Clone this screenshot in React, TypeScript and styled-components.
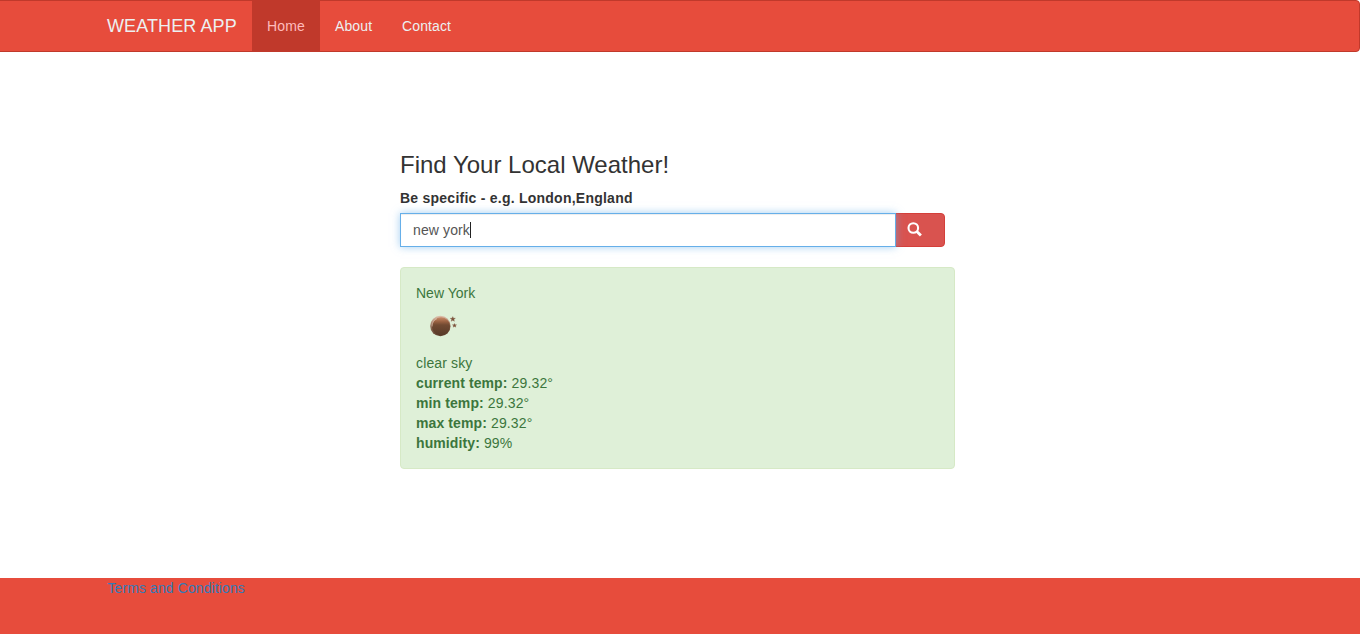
import React from "react";
import styled, { createGlobalStyle } from "styled-components";

const GlobalStyle = createGlobalStyle`
  *, *::before, *::after { box-sizing: border-box; }
  body {
    margin: 0;
    background: #fff;
    color: #333;
    font: 14px/20px "Liberation Sans", Arial, sans-serif;
    overflow: hidden;
  }
`;

const Page = styled.div`
  display: flex;
  flex-direction: column;
  height: 634px;
  margin-left: -5px;
`;

const Navbar = styled.nav`
  height: 52px;
  background: #e74c3c;
  border: 1px solid #c0392b;
  border-radius: 4px;
`;

const Container = styled.div`
  display: flex;
  width: 1170px;
  margin: 0 auto;
`;

const Brand = styled.a`
  padding: 15px 14px 15px 14.5px;
  width: 159.5px;
  font-size: 18px;
  letter-spacing: 0.1px;
  color: #ecf0f1;
  white-space: nowrap;
`;

const NavLink = styled.a<{ $active?: boolean; $width: number }>`
  width: ${(p) => p.$width}px;
  padding: 15px 14px 15px 15px;
  letter-spacing: 0.12px;
  color: ${(p) => (p.$active ? "#ffbbbc" : "#ecf0f1")};
  background: ${(p) => (p.$active ? "#c0392b" : "transparent")};
`;

const Main = styled.main`
  flex: 1;
  width: 555px;
  margin-left: 405px;
  padding-top: 99.6px;
`;

const Title = styled.h3`
  margin: 0 0 10px;
  font-size: 24px;
  font-weight: 400;
  line-height: 26.4px;
`;

const Label = styled.label`
  display: block;
  margin-bottom: 5px;
  font-weight: 700;
  letter-spacing: 0.24px;
`;

const SearchGroup = styled.div`
  display: flex;
  width: 545px;
  margin-bottom: 20px;
`;

const Field = styled.div`
  z-index: 1;
  display: flex;
  align-items: center;
  width: 496px;
  height: 34px;
  padding: 6px 12px;
  border: 1px solid #66afe9;
  background: #fff;
  color: #555;
  letter-spacing: 0.12px;
  box-shadow: inset 0 1px 1px rgba(0, 0, 0, 0.075), 0 0 8px rgba(102, 175, 233, 0.6);
`;

const Caret = styled.span`
  width: 1px;
  height: 16px;
  background: #222;
`;

const SearchButton = styled.button`
  width: 50px;
  height: 34px;
  margin: 0 0 0 -1px;
  padding: 0 0 0 11px;
  display: flex;
  align-items: center;
  border: 1px solid #d43f3a;
  border-radius: 0 4px 4px 0;
  background: #d9534f;
`;

const Result = styled.section`
  height: 202px;
  padding: 15px;
  border: 1px solid #d6e9c6;
  border-radius: 4px;
  background: #dff0d8;
  color: #3c763d;
`;

const MoonIcon = styled.svg`
  display: block;
  width: 50px;
  height: 50px;
`;

const Term = styled.strong`
  letter-spacing: 0.1px;
`;

const Reading = styled.div`
  letter-spacing: 0.14px;
`;

const Footer = styled.footer`
  height: 56px;
  background: #e74c3c;
`;

const FooterLink = styled.a`
  padding-left: 15px;
  letter-spacing: 0.1px;
  color: #337ab7;
`;

const readings = [
  { name: "current temp:", value: "29.32°" },
  { name: "min temp:", value: "29.32°" },
  { name: "max temp:", value: "29.32°" },
  { name: "humidity:", value: "99%" },
];

export default function App() {
  return (
    <>
      <GlobalStyle />
      <Page>
        <Navbar>
          <Container>
            <Brand>WEATHER APP</Brand>
            <NavLink $active $width={68}>Home</NavLink>
            <NavLink $width={67}>About</NavLink>
            <NavLink $width={80}>Contact</NavLink>
          </Container>
        </Navbar>
        <Main>
          <Title>Find Your Local Weather!</Title>
          <Label>Be specific - e.g. London,England</Label>
          <SearchGroup>
            <Field>
              new york
              <Caret />
            </Field>
            <SearchButton aria-label="Search">
              <svg width="16" height="16" viewBox="0 0 16 16" fill="none" stroke="#fff">
                <circle cx="6.3" cy="6" r="4.8" strokeWidth="2.1" />
                <path d="M9.6 9.3L13.9 13.5" strokeWidth="2.8" />
              </svg>
            </SearchButton>
          </SearchGroup>
          <Result>
            <div>New York</div>
            <MoonIcon viewBox="0 0 50 50">
              <defs>
                <linearGradient id="rim" x1="0" y1="0" x2="0" y2="1">
                  <stop offset="0" stopColor="#dfc0ab" />
                  <stop offset="0.5" stopColor="#93705c" />
                  <stop offset="1" stopColor="#60412f" />
                </linearGradient>
                <linearGradient id="moon" x1="0" y1="0" x2="0" y2="1">
                  <stop offset="0" stopColor="#cb8b68" />
                  <stop offset="0.25" stopColor="#965f40" />
                  <stop offset="0.42" stopColor="#714a32" />
                  <stop offset="1" stopColor="#573a28" />
                </linearGradient>
              </defs>
              <circle cx="24.4" cy="23" r="10.2" fill="url(#rim)" />
              <circle cx="25" cy="23.4" r="9.1" fill="url(#moon)" />
              <path d="M16.1 23.5A8.6 8.6 0 0 1 21 15.6" fill="none" stroke="#dfc1ae" strokeWidth=".8" opacity=".8" />
              <path
                d="M36.8 13.6l.7 1.6 1.9.1-1.5 1.2.5 1.8-1.6-1-1.6 1 .5-1.8-1.5-1.2 1.9-.1z M38.5 20.5l.6 1.2 1.5.1-1.2 1 .4 1.4-1.3-.8-1.3.8.4-1.4-1.2-1 1.5-.1z"
                fill="#7b5039"
                stroke="#7b5039"
                strokeWidth=".3"
              />
            </MoonIcon>
            <Reading>clear sky</Reading>
            {readings.map((r) => (
              <Reading key={r.name}>
                <Term>{r.name}</Term> {r.value}
              </Reading>
            ))}
          </Result>
        </Main>
        <Footer>
          <Container>
            <FooterLink>Terms and Conditions</FooterLink>
          </Container>
        </Footer>
      </Page>
    </>
  );
}
